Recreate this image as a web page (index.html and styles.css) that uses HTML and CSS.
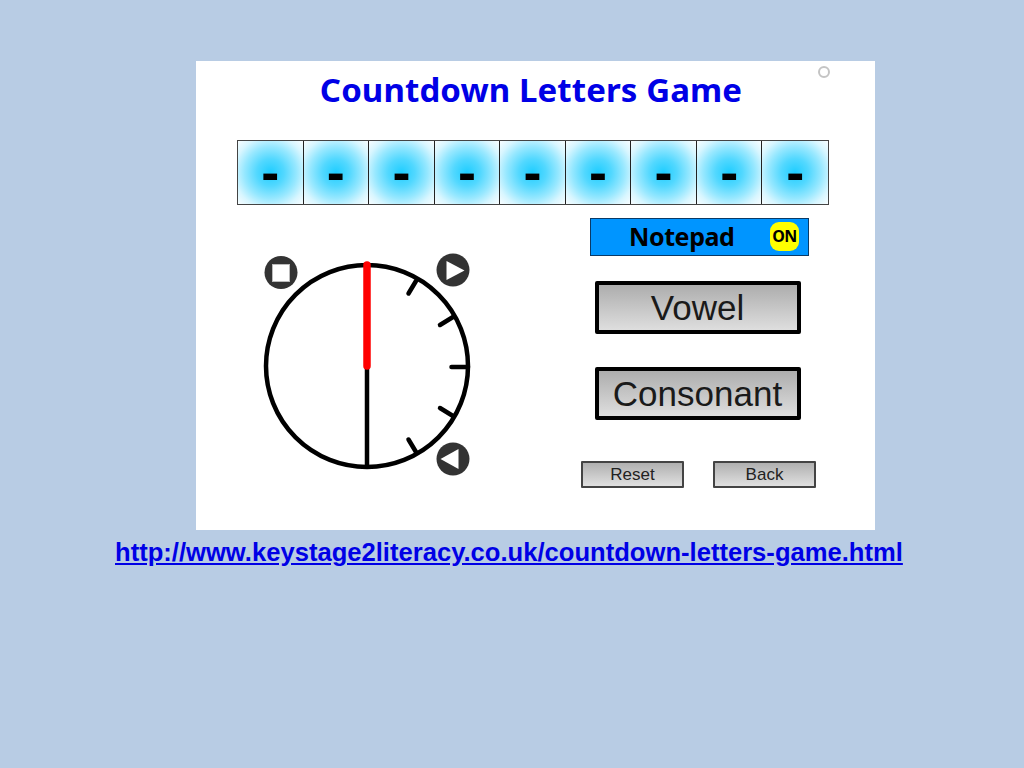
FILE: index.html
```html
<!DOCTYPE html>
<html>
<head>
  <title>Countdown Letters Game</title>
  <link rel="stylesheet" href="styles.css">
</head>
<body>
  <div class="game">
    <span class="corner-dot"></span>
    <h1 class="title">Countdown Letters Game</h1>

    <div class="tiles">
      <div class="tile">-</div>
      <div class="tile">-</div>
      <div class="tile">-</div>
      <div class="tile">-</div>
      <div class="tile">-</div>
      <div class="tile">-</div>
      <div class="tile">-</div>
      <div class="tile">-</div>
      <div class="tile">-</div>
    </div>

    <div class="board">
      <!-- clock -->
      <svg class="clock" width="220" height="232" viewBox="260 250 220 232">
        <circle cx="367" cy="366" r="101" fill="#fff" stroke="#000" stroke-width="4.5"/>
        <g stroke="#000" stroke-width="4.5" stroke-linecap="round">
          <line x1="367" y1="366" x2="367" y2="467" stroke-linecap="butt"/>
          <line x1="408.5" y1="293.5" x2="416" y2="281"/>
          <line x1="440" y1="325" x2="453" y2="317"/>
          <line x1="451.5" y1="367" x2="468" y2="367"/>
          <line x1="440" y1="408" x2="453" y2="416"/>
          <line x1="408.5" y1="439.5" x2="416" y2="452"/>
        </g>
        <line x1="367" y1="265" x2="367" y2="366" stroke="#f00" stroke-width="7.5" stroke-linecap="round"/>

        <circle cx="281" cy="272.5" r="16.5" fill="#333"/>
        <rect x="272.5" y="264.5" width="17" height="17" fill="#fff" stroke="#bbb" stroke-width="1"/>

        <circle cx="453" cy="270" r="16.5" fill="#333"/>
        <polygon points="446.5,261 464.5,270.5 446.5,280" fill="#fff"/>

        <circle cx="453" cy="459" r="16.5" fill="#333"/>
        <polygon points="458.5,449 440.5,459 458.5,469" fill="#fff"/>
      </svg>

      <div class="controls">
        <div class="notepad">
          <span class="notepad-label">Notepad</span>
          <span class="notepad-state">ON</span>
        </div>
        <button class="big-button">Vowel</button>
        <button class="big-button">Consonant</button>
        <div class="small-buttons">
          <button class="small-button">Reset</button>
          <button class="small-button">Back</button>
        </div>
      </div>
    </div>
  </div>

  <p class="source"><a href="#">http://www.keystage2literacy.co.uk/countdown-letters-game.html</a></p>
</body>
</html>
```

FILE: styles.css
```css
body {
  margin: 0;
  height: 768px;
  overflow: hidden;
  background-color: #b8cce4;
  font-family: "Liberation Sans", Arial, sans-serif;
}

.game {
  position: relative;
  box-sizing: border-box;
  width: 679px;
  height: 469px;
  margin: 61px 0 0 196px;
  padding: 9px 46px 0 41px;
  background-color: #fff;
}

.corner-dot {
  position: absolute;
  top: 5px;
  left: 622px;
  width: 8px;
  height: 8px;
  border: 2px solid #c4c4c4;
  border-radius: 50%;
}

.title {
  height: 40px;
  margin: 0 0 30px;
  padding-right: 4px;
  font-family: "Noto Sans", sans-serif;
  font-size: 33px;
  font-weight: 700;
  letter-spacing: 0.1px;
  line-height: 40px;
  text-align: center;
  white-space: nowrap;
  color: #0000e6;
}

/* Tiles */
.tiles {
  display: grid;
  grid-template-columns: repeat(9, 1fr);
  box-sizing: border-box;
  height: 65px;
  border: 1px solid #444;
}

.tile {
  display: flex;
  align-items: center;
  justify-content: center;
  box-sizing: border-box;
  border-right: 1px solid #222;
  background: radial-gradient(circle, #1fcdff 0%, #52d8ff 30%, #98e8ff 58%, #d8f6ff 80%, #f8fdff 100%);
  font-family: "Liberation Sans", sans-serif;
  font-size: 54px;
  font-weight: 700;
  line-height: 61px;
  color: #000;
}

.tile:last-child {
  border-right: none;
}

/* Board */
.board {
  display: flex;
  align-items: flex-start;
  height: 280px;
}

.clock {
  flex: none;
  margin: 45px 0 0 23px;
}

.controls {
  display: flex;
  flex-direction: column;
  align-items: center;
  width: 235px;
  margin: 13px 0 0 101px;
}

.notepad {
  position: relative;
  display: flex;
  align-items: center;
  box-sizing: border-box;
  width: 219px;
  height: 38px;
  margin-left: 2px;
  border: 1px solid #0a3a66;
  background-color: #0095ff;
  font-family: "Noto Sans", sans-serif;
  font-weight: 700;
  color: #000;
}

.notepad-label {
  margin: -3px 0 0 38px;
  font-size: 25px;
  letter-spacing: -0.4px;
}

.notepad-state {
  position: absolute;
  top: 3px;
  right: 9px;
  width: 29px;
  height: 29px;
  border-radius: 9px;
  background-color: #ffff00;
  font-size: 16px;
  letter-spacing: -0.5px;
  line-height: 29px;
  text-align: center;
}

.big-button {
  box-sizing: border-box;
  width: 206px;
  height: 53px;
  margin: 25px 2px 0 0;
  padding: 0;
  border: 4px solid #000;
  border-radius: 2px;
  background: linear-gradient(#adadad, #dedede);
  font-family: "Liberation Sans", sans-serif;
  font-size: 35px;
  color: #1a1a1a;
}

.big-button + .big-button {
  margin-top: 33px;
}

.small-buttons {
  display: flex;
  gap: 29px;
  margin-top: 41px;
}

.small-button {
  box-sizing: border-box;
  width: 103px;
  height: 27px;
  padding: 0;
  border: 2px solid #444;
  border-radius: 1px;
  background: linear-gradient(#b0b0b0, #e0e0e0);
  font-family: "Liberation Sans", sans-serif;
  font-size: 17px;
  color: #222;
}

/* Link under the game */
.source {
  margin: 6px 0 0 115px;
  font-size: 25.6px;
  font-weight: 700;
  line-height: 32px;
  white-space: nowrap;
}

.source a {
  color: #0000e6;
}
```
